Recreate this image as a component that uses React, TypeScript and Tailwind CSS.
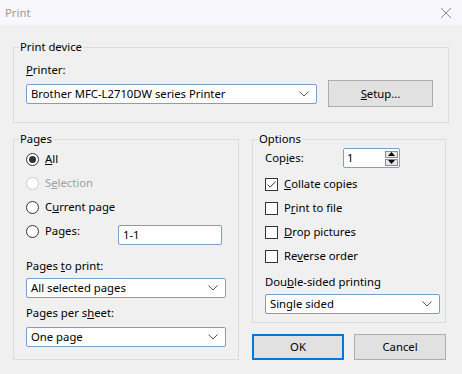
import clsx from "clsx";
import type { ReactNode } from "react";

const Chevron = () => (
  <svg width="10" height="6" viewBox="0 0 10 6" fill="none">
    <path d="M0.5 0.5 L5 5 L9.5 0.5" stroke="#505050" strokeWidth="1" />
  </svg>
);

const Select = ({ value, className }: { value: string; className: string }) => (
  <div
    className={clsx(
      "flex h-[20px] items-center justify-between rounded-[2px] border border-[#7a9fcf] bg-white pl-[4px] pr-[7px]",
      className,
    )}
  >
    <span>{value}</span>
    <Chevron />
  </div>
);

const Radio = ({ checked, disabled }: { checked?: boolean; disabled?: boolean }) => (
  <span
    className={clsx(
      "flex h-[13px] w-[13px] shrink-0 items-center justify-center rounded-full border bg-white",
      disabled ? "border-[#cccccc]" : "border-[#333333]",
    )}
  >
    {checked && <span className="h-[7px] w-[7px] rounded-full bg-[#333333]" />}
  </span>
);

const Checkbox = ({ checked }: { checked?: boolean }) => (
  <span className="flex h-[13px] w-[13px] shrink-0 items-center justify-center border border-[#333333] bg-white">
    {checked && (
      <svg width="11" height="11" viewBox="0 0 11 11" fill="none">
        <path d="M1.5 5.5 L4.2 8.2 L9.5 2.5" stroke="#333" strokeWidth="1" />
      </svg>
    )}
  </span>
);

const Group = ({
  title,
  className,
  children,
}: {
  title: string;
  className: string;
  children: ReactNode;
}) => (
  <fieldset className={clsx("border border-[#dcdcdc] px-[12px]", className)}>
    <legend className="ml-[-7px] h-[16px] px-[1px] leading-[16px]">{title}</legend>
    {children}
  </fieldset>
);

const Button = ({
  children,
  primary,
  className,
}: {
  children: ReactNode;
  primary?: boolean;
  className?: string;
}) => (
  <div
    className={clsx(
      "flex items-center justify-center bg-[#e1e1e1]",
      primary ? "border-2 border-[#0078d7]" : "border border-[#adadad]",
      className ?? "h-[26px] w-[93px]",
    )}
  >
    {children}
  </div>
);

export default function App() {
  return (
    <div
      className="flex h-[374px] w-[462px] flex-col bg-[#f0f0f0] text-[11.3px] leading-[16px] text-black"
      style={{ fontFamily: '"Segoe UI", "Noto Sans", sans-serif' }}
    >
      <div className="flex h-[25px] shrink-0 items-center justify-between bg-[#f8f7fb] pl-[5px] pr-[10px] text-[#9a9a9a]">
        <span>Print</span>
        <svg width="12" height="12" viewBox="0 0 12 12" fill="none">
          <path d="M1 1 L11 11 M11 1 L1 11" stroke="#8a8a8a" strokeWidth="1" />
        </svg>
      </div>

      <div className="flex flex-col px-[13px] pt-[14px]">
        <Group title="Print device" className="pb-[15px] pr-[14px]">
          <div className="mt-[7px]">
            <u>P</u>rinter:
          </div>
          <div className="mt-[2px] flex h-[27px] items-center gap-[11px]">
            <Select value="Brother MFC-L2710DW series Printer" className="w-[291px]" />
            <Button className="h-[27px] w-[105px]">
              <span>
                <u>S</u>etup...
              </span>
            </Button>
          </div>
        </Group>

        <div className="mt-[8px] flex gap-[13px]">
          <Group title="Pages" className="w-[226px] pb-[10px]">
            <div className="flex h-[24px] items-center gap-[6px]">
              <Radio checked />
              <span>
                <u>A</u>ll
              </span>
            </div>
            <div className="flex h-[24px] items-center gap-[6px] text-[#a0a0a0]">
              <Radio disabled />
              <span>
                S<u>e</u>lection
              </span>
            </div>
            <div className="flex h-[24px] items-center gap-[6px]">
              <Radio />
              <span>
                C<u>u</u>rrent page
              </span>
            </div>
            <div className="flex h-[24px] items-center">
              <Radio />
              <span className="ml-[6px] w-[73px]">Pages:</span>
              <div className="mt-[8px] flex h-[20px] w-[104px] items-center rounded-[2px] border border-[#7a9fcf] bg-white pl-[4px]">
                1-1
              </div>
            </div>
            <div className="mt-[15px]">
              Pages <u>t</u>o print:
            </div>
            <Select value="All selected pages" className="mt-[4px] w-[200px]" />
            <div className="mt-[7px]">
              Pages per s<u>h</u>eet:
            </div>
            <Select value="One page" className="mt-[6px] w-[200px]" />
          </Group>

          <div className="flex w-[194px] flex-col">
            <Group title="Options" className="pb-[8px] pr-[5px]">
              <div className="flex h-[22px] items-center">
                <span className="w-[78px]">
                  Cop<u>i</u>es:
                </span>
                <div className="flex h-[20px] w-[57px] items-center justify-between rounded-[2px] border border-[#7a9fcf] bg-white pl-[3px] pr-[1px]">
                  <span>1</span>
                  <div className="flex flex-col gap-px">
                    <div className="flex h-[7px] w-[13px] items-center justify-center border border-[#8c8c8c] bg-[#e6e6e6]">
                      <svg width="7" height="4" viewBox="0 0 7 4">
                        <path d="M0 4 L3.5 0 L7 4 Z" fill="#000" />
                      </svg>
                    </div>
                    <div className="flex h-[7px] w-[13px] items-center justify-center border border-[#8c8c8c] bg-[#e6e6e6]">
                      <svg width="7" height="4" viewBox="0 0 7 4">
                        <path d="M0 0 L3.5 4 L7 0 Z" fill="#000" />
                      </svg>
                    </div>
                  </div>
                </div>
              </div>
              <div className="mt-[3px] flex h-[24px] items-center gap-[6px]">
                <Checkbox checked />
                <span>
                  <u>C</u>ollate copies
                </span>
              </div>
              <div className="flex h-[24px] items-center gap-[6px]">
                <Checkbox />
                <span>
                  P<u>r</u>int to file
                </span>
              </div>
              <div className="flex h-[24px] items-center gap-[6px]">
                <Checkbox />
                <span>
                  <u>D</u>rop pictures
                </span>
              </div>
              <div className="flex h-[24px] items-center gap-[6px]">
                <Checkbox />
                <span>
                  Re<u>v</u>erse order
                </span>
              </div>
              <div className="mt-[6px]">
                Dou<u>b</u>le-sided printing
              </div>
              <Select value="Single sided" className="mt-[4px] w-[175px]" />
            </Group>
            <div className="mt-[11px] flex gap-[10px]">
              <Button primary>OK</Button>
              <Button>Cancel</Button>
            </div>
          </div>
        </div>
      </div>
    </div>
  );
}
